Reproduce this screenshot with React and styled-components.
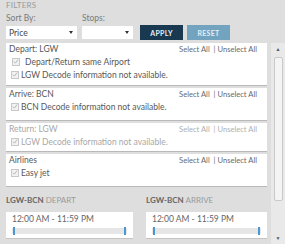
import React from 'react';
import styled, { createGlobalStyle } from 'styled-components';

const GlobalStyle = createGlobalStyle`
  html, body { margin: 0; padding: 0; }
  body { background: #dedede; font-family: Lato, "Open Sans", sans-serif; }
`;

const sections = [
  { title: 'Depart: LGW', pad: 4, rows: [{ label: 'Depart/Return same Airport', wide: true }, { label: 'LGW Decode information not available.' }] },
  { title: 'Arrive: BCN', pad: 7, rows: [{ label: 'BCN Decode information not available.' }] },
  { title: 'Return: LGW', pad: 3, muted: true, rows: [{ label: 'LGW Decode information not available.' }] },
  { title: 'Airlines', pad: 7, rows: [{ label: 'Easy jet' }] },
];

function Check() {
  return (
    <Box>
      <svg width="7" height="7" viewBox="0 0 7 7">
        <path d="M1 3.6 L2.8 5.4 L6 1.2" fill="none" stroke="#b5b5b5" strokeWidth="1.1" />
      </svg>
    </Box>
  );
}

function Select({ value, width }) {
  return (
    <SelectBox $w={width}>
      <span>{value}</span>
      <Caret />
    </SelectBox>
  );
}

function TimeCard({ label }) {
  return (
    <TimeCol>
      <TimeTitle><b>LGW-BCN</b> {label}</TimeTitle>
      <TimeBox>
        <TimeText>12:00 AM - 11:59 PM</TimeText>
        <Track>
          <Handle />
          <Handle />
        </Track>
      </TimeBox>
    </TimeCol>
  );
}

export default function App() {
  return (
    <>
      <GlobalStyle />
      <Page>
        <Header>FILTERS</Header>
        <Controls>
          <Field>
            <Label>Sort By:</Label>
            <Select value="Price" width={71} />
          </Field>
          <Field>
            <Label>Stops:</Label>
            <Select value="" width={51} />
          </Field>
          <Button $primary>APPLY</Button>
          <Button>RESET</Button>
        </Controls>
        <Body>
          <Content>
            {sections.map((s) => (
              <Card key={s.title} $muted={s.muted} $pad={s.pad}>
                <CardHead>
                  <span>{s.title}</span>
                  <Links>Select All&nbsp; | Unselect All</Links>
                </CardHead>
                {s.rows.map((r) => (
                  <Row key={r.label} $wide={r.wide}>
                    <Check />
                    <span>{r.label}</span>
                  </Row>
                ))}
              </Card>
            ))}
            <TimeGrid>
              <TimeCard label="DEPART" />
              <TimeCard label="ARRIVE" />
            </TimeGrid>
          </Content>
          <Scrollbar>
            <Arrow>▲</Arrow>
            <ScrollTrack>
              <Thumb />
            </ScrollTrack>
            <Arrow>▼</Arrow>
          </Scrollbar>
        </Body>
      </Page>
    </>
  );
}

const Page = styled.div`
  width: 285px;
  height: 244px;
  overflow: hidden;
  background: #dedede;
  display: flex;
  flex-direction: column;
`;

const Header = styled.div`
  height: 13px;
  padding: 0 6px;
  font-size: 8px;
  line-height: 11px;
  color: #9a9a9a;
  letter-spacing: 0.2px;
`;

const Controls = styled.div`
  display: flex;
  align-items: flex-end;
  padding: 0 6px;
  gap: 4px;
  height: 27px;
`;

const Field = styled.div`
  display: flex;
  flex-direction: column;
  margin-right: 1px;
  margin-bottom: 1px;
`;

const Label = styled.div`
  font-size: 8.5px;
  line-height: 11px;
  color: #7a7a7a;
  margin-bottom: 2px;
`;

const SelectBox = styled.div`
  width: ${(p) => p.$w}px;
  height: 13px;
  background: #fff;
  display: flex;
  align-items: center;
  justify-content: space-between;
  padding: 0 4px 0 3px;
  box-sizing: border-box;
  font-size: 8.5px;
  color: #444;
`;

const Caret = styled.div`
  width: 0;
  height: 0;
  border-left: 2.5px solid transparent;
  border-right: 2.5px solid transparent;
  border-top: 3px solid #333;
`;

const Button = styled.div`
  width: 43px;
  height: 15px;
  display: flex;
  align-items: center;
  justify-content: center;
  font-size: 7px;
  font-weight: 700;
  letter-spacing: 0.3px;
  color: ${(p) => (p.$primary ? '#e9eef2' : '#e4eef4')};
  background: ${(p) => (p.$primary ? '#18394f' : '#72a4bf')};
  margin-left: ${(p) => (p.$primary ? '2px' : '0')};
`;

const Body = styled.div`
  flex: 1;
  display: flex;
  margin-top: 3px;
  min-height: 0;
`;

const Content = styled.div`
  width: 261px;
  padding-left: 6px;
  display: flex;
  flex-direction: column;
  gap: 2px;
`;

const Card = styled.div`
  background: #fff;
  border-bottom: 1px solid #b9b9b9;
  padding: 1px 0 ${(p) => p.$pad}px;
  color: ${(p) => (p.$muted ? '#a8a8a8' : '#585858')};
  font-size: 8.5px;
`;

const CardHead = styled.div`
  display: flex;
  justify-content: space-between;
  line-height: 11px;
  padding: 0 10px 0 3px;
`;

const Links = styled.span`
  font-size: 7.6px;
  opacity: 0.9;
`;

const Row = styled.div`
  display: flex;
  align-items: center;
  height: 13px;
  padding-left: ${(p) => (p.$wide ? '6px' : '5px')};
  gap: ${(p) => (p.$wide ? '5px' : '2px')};
`;

const Box = styled.div`
  width: 8px;
  height: 8px;
  box-sizing: border-box;
  border: 1px solid #c8c8c8;
  background: #f2f2f2;
  display: flex;
  align-items: center;
  justify-content: center;
`;

const TimeGrid = styled.div`
  display: grid;
  grid-template-columns: 127px 121px;
  column-gap: 13px;
  margin-top: 6px;
`;

const TimeCol = styled.div`
  display: flex;
  flex-direction: column;
`;

const TimeTitle = styled.div`
  font-size: 8px;
  line-height: 11px;
  color: #9a9a9a;
  margin-bottom: 6px;
  b { color: #666; font-weight: 700; }
`;

const TimeBox = styled.div`
  background: #fff;
  height: 27px;
  border-bottom: 1px solid #c4c4c4;
  padding: 2px 6px 0;
  box-sizing: border-box;
`;

const TimeText = styled.div`
  font-size: 8.5px;
  line-height: 11px;
  color: #666;
`;

const Track = styled.div`
  margin-top: 3px;
  height: 6px;
  background: #e6e6e6;
  display: flex;
  justify-content: space-between;
  align-items: center;
  padding: 0 1px;
`;

const Handle = styled.div`
  width: 2px;
  height: 8px;
  background: #4a97d2;
`;

const Scrollbar = styled.div`
  width: 14px;
  margin-left: auto;
  background: #e9e9e9;
  display: flex;
  flex-direction: column;
  align-items: center;
`;

const Arrow = styled.div`
  font-size: 5px;
  line-height: 12px;
  color: #555;
  height: 12px;
`;

const ScrollTrack = styled.div`
  flex: 1;
  width: 100%;
  padding: 2px 2px 0 3px;
  box-sizing: border-box;
`;

const Thumb = styled.div`
  height: 142px;
  background: #f4f4f4;
  border: 1px solid #c9c9c9;
  border-radius: 2px;
`;
